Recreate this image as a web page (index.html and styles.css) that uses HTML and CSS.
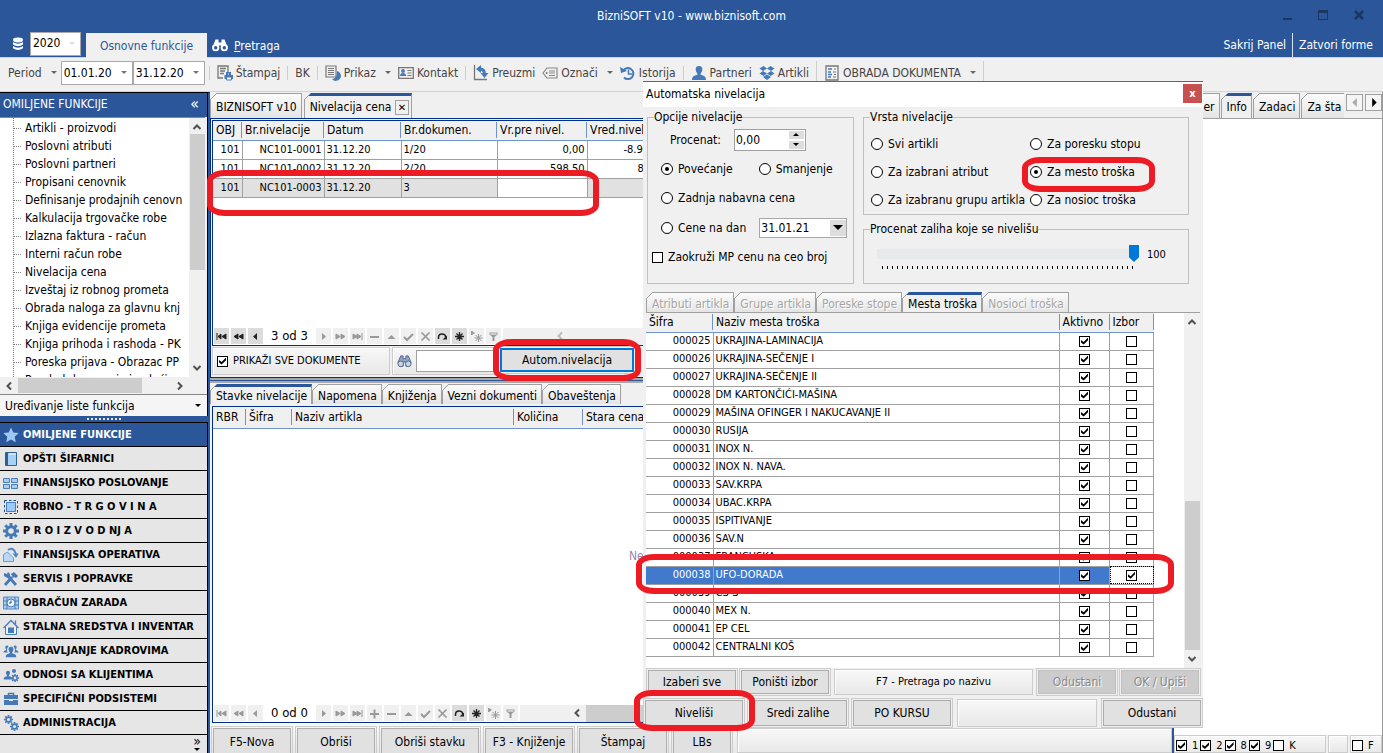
FILE: index.html
```html
<!DOCTYPE html>
<html lang="sr-Latn">
<head>
    <meta charset="UTF-8">
    <meta name="viewport" content="width=device-width, initial-scale=1.0">
    <title>BizniSOFT v10 - www.biznisoft.com</title>
    <link rel="stylesheet" href="styles.css">
</head>
<body>
    <svg class="sprite" aria-hidden="true">
        <symbol id="n-first" viewBox="0 0 15 15"><path d="M3 4v7M7 5v5l-3-2.500zM12 5v5l-4-2.500z" fill="currentColor" stroke="currentColor"/></symbol>
        <symbol id="n-back" viewBox="0 0 15 15"><path d="M7 5v5l-4-2.500zM12 5v5l-4-2.500z" fill="currentColor" stroke="currentColor"/></symbol>
        <symbol id="n-prev" viewBox="0 0 15 15"><path d="M9 4v7l-4-3.500z" fill="currentColor"/></symbol>
        <symbol id="n-next" viewBox="0 0 15 15"><path d="M6 4v7l4-3.500z" fill="currentColor"/></symbol>
        <symbol id="n-fwd" viewBox="0 0 15 15"><path d="M3 5v5l4-2.500zM8 5v5l4-2.500z" fill="currentColor" stroke="currentColor"/></symbol>
        <symbol id="n-last" viewBox="0 0 15 15"><path d="M12 4v7M3 5v5l4-2.500zM7 5v5l4-2.500z" fill="currentColor" stroke="currentColor"/></symbol>
        <symbol id="n-add" viewBox="0 0 15 15"><path d="M3 7h9v2H3zM6.500 3.500h2v9h-2z" fill="currentColor"/></symbol>
        <symbol id="n-del" viewBox="0 0 15 15"><path d="M3 7h9v2H3z" fill="currentColor"/></symbol>
        <symbol id="n-edit" viewBox="0 0 15 15"><path d="M3.500 10h8l-4-4z" fill="currentColor"/></symbol>
        <symbol id="n-post" viewBox="0 0 15 15"><path d="M3 8l3 3 6-6" fill="none" stroke="currentColor" stroke-width="2"/></symbol>
        <symbol id="n-cancel" viewBox="0 0 15 15"><path d="M3.500 3.500l8 8M11.500 3.500l-8 8" stroke="currentColor" stroke-width="1.700"/></symbol>
        <symbol id="n-redo" viewBox="0 0 15 15"><path d="M3.500 10V8.500Q3.500 5 7 5t3.500 3" fill="none" stroke="currentColor" stroke-width="1.500"/><path d="M7.500 10.500H12V6.500z" fill="currentColor"/></symbol>
        <symbol id="n-star" viewBox="0 0 15 15"><path d="M7.500 3v9M3 7.500h9M4.500 4.500l6 6M10.500 4.500l-6 6" stroke="currentColor" stroke-width="1.300"/></symbol>
        <symbol id="n-goto" viewBox="0 0 15 15"><path d="M9.500 5v8M5.500 9h8M6.500 6l6 6M12.500 6l-6 6M2.500 2v4" stroke="currentColor"/><path d="M3 2l3 2-3 2z" fill="currentColor"/></symbol>
        <symbol id="n-filter" viewBox="0 0 15 15"><path d="M3.500 3.500h8v2l-3 2.500v4h-2V8l-3-2.500z" fill="currentColor"/><path d="M4.500 5h6" stroke="#fff"/></symbol>
        <symbol id="gear" viewBox="0 0 16 16"><path d="M8 3V0M8 16v-3M3 8H0M16 8h-3M4.500 4.500L2.300 2.300M11.500 11.500l2.200 2.200M4.500 11.500l-2.200 2.200M11.500 4.500l2.200-2.200" stroke="currentColor" stroke-width="3"/><circle cx="8" cy="8" r="4.300" fill="none" stroke="currentColor" stroke-width="3"/></symbol>
        <symbol id="person" viewBox="0 0 16 16"><path d="M8 1c2.500 0 3.500 1.600 3.300 3.800C11 7 10 8 9.600 8.700v1.100C12 10.500 15 11 15 15H1c0-4 3-4.500 5.400-5.200V8.700C6 8 5 7 4.700 4.800 4.500 2.600 5.500 1 8 1z" fill="currentColor"/></symbol>
        <symbol id="binoc" viewBox="0 0 16 16"><path d="M4 2h2.500v3h3V2H12l3 7-2 4H9.500V8.500h-3V13H3L1 9z" fill="#8fa3c4" stroke="#4f6488"/><circle cx="4" cy="10.500" r="3" fill="#c9d6ea" stroke="#4f6488"/><circle cx="12" cy="10.500" r="3" fill="#c9d6ea" stroke="#4f6488"/></symbol>
    </svg>

    <div class="app">
        <header class="title-bar">
            <span>BizniSOFT v10 - www.biznisoft.com</span>
            <div class="window-buttons">
                <button aria-label="Minimize"><svg viewBox="0 0 12 12"><path d="M2 9h9v2H2z" fill="#1a3661"/></svg></button>
                <button aria-label="Maximize"><svg viewBox="0 0 12 12"><path d="M1 1h10v10H1zM2 4v6h8V4z" fill="#1a3661" fill-rule="evenodd"/></svg></button>
                <button aria-label="Close"><svg viewBox="0 0 12 12"><path d="M2 2l8 8M10 2l-8 8" stroke="#1a3661" stroke-width="2.500"/></svg></button>
            </div>
        </header>

        <nav class="menu-bar">
            <svg class="db-icon" viewBox="0 0 12 14"><ellipse cx="6" cy="3" rx="5" ry="2.400" fill="#fff"/><path d="M1 5q5 3.500 10 0v2.500q-5 3.500-10 0zM1 9q5 3.500 10 0v2.200q-5 3.500-10 0z" fill="#fff"/></svg>
            <span class="combo year"><select aria-label="Godina"><option>2020</option></select></span>
            <button class="ribbon-tab">Osnovne funkcije</button>
            <button class="search-link">
                <svg viewBox="0 0 16 14"><path d="M3.500 1.500h3v3h3v-3h3L15 8v3H9.500V7.500h-3V11H1V8z" fill="#fff"/><circle cx="3.700" cy="9.700" r="3.600" fill="#fff"/><circle cx="12.300" cy="9.700" r="3.600" fill="#fff"/><circle cx="3.700" cy="9.700" r="1.700" fill="#2b579a"/><circle cx="12.300" cy="9.700" r="1.700" fill="#2b579a"/></svg>
                <span><u>P</u>retraga</span>
            </button>
            <div class="menu-right">
                <button>Sakrij Panel</button>
                <button>Zatvori forme</button>
            </div>
        </nav>

        <div class="toolbar">
            <button class="period caret">Period</button>
            <span class="combo date"><input type="text" value="01.01.20" aria-label="Od datuma"></span>
            <span class="combo date"><input type="text" value="31.12.20" aria-label="Do datuma"></span>
            <i class="sep"></i>
            <button><svg viewBox="0 0 16 16"><path d="M6 13H1V1h10v6M3 3.500h6M3 6h5M3 8.500h4" fill="none" stroke="#777" stroke-width="1.300"/><path d="M9 7h5v3h2v4H7.500v-4H9z" fill="#4679b8"/><path d="M10.500 8h2v2h-2zM9.500 12h5v3h-5z" fill="#fff" stroke="#4679b8"/></svg>Štampaj</button>
            <i class="sep"></i>
            <button>BK</button>
            <i class="sep"></i>
            <button class="caret"><svg viewBox="0 0 16 16"><path d="M1 1h10v11H1zM3 3.500h6M3 5.500h6M3 7.500h6M3 9.500h6" fill="none" stroke="#777" stroke-width="1.200"/><path d="M12 6a5 5 0 1 1-5 8q5 0 5-8z" fill="#4679b8"/></svg>Prikaz</button>
            <button><svg viewBox="0 0 16 16"><path d="M.7 2.700h14.600v10.600H.7z" fill="none" stroke="#777" stroke-width="1.300"/><path d="M9.500 5.500h4M9.500 8h4M9.500 10.500h4" stroke="#777"/><circle cx="5" cy="6" r="1.900" fill="#4679b8"/><path d="M2 11q0-3 3-3t3 3z" fill="#4679b8"/></svg>Kontakt</button>
            <i class="sep"></i>
            <button><svg viewBox="0 0 16 16"><path d="M1.500 0v14.500H14" fill="none" stroke="#777" stroke-width="1.300"/><path d="M7 4q4.500 0 4.500 5" fill="none" stroke="#4679b8" stroke-width="3"/><path d="M8 0v8L3 4zM7.500 8h8l-4 5z" fill="#4679b8"/></svg>Preuzmi</button>
            <button class="caret"><svg viewBox="0 0 16 16"><path d="M1 8l4-5h10v10H5zM7 6h6M7 8h6M7 10.500h6" fill="none" stroke="#888" stroke-width="1.200"/><circle cx="4.700" cy="8" r="1" fill="#777"/></svg>Označi</button>
            <button><svg viewBox="0 0 16 16"><path d="M3 6a5.500 5.500 0 1 1 1 6.500" fill="none" stroke="#4679b8" stroke-width="2"/><path d="M0 2l1 6 6-2z" fill="#4679b8"/><path d="M8.500 4.500V9H12" fill="none" stroke="#4679b8" stroke-width="1.500"/></svg>Istorija</button>
            <i class="sep"></i>
            <button><svg class="blue"><use href="#person"/></svg>Partneri</button>
            <button><svg viewBox="0 0 16 16"><path d="M4.500 1L8 3.500 4 6 .5 3.500zM11.500 1l4 2.500L12 6 8 3.500zM4 6l4 2.500L4.500 11 .5 8.500zM12 6l3.500 2.500-4 2.500L8 8.500zM4 12l4-2.500 4 2.500-4 3z" fill="#4679b8"/></svg>Artikli</button>
            <i class="sep tall"></i>
            <button class="caret"><svg viewBox="0 0 16 16"><path d="M2 1h12v14H2z" fill="none" stroke="#777" stroke-width="1.300"/><path d="M4 4h4M4 7h3M4 9.500h4M4 12h3" stroke="#4679b8" stroke-width="1.500"/><path d="M10 4h2M9 7h3M10 9.500h2M9 12h3" stroke="#777"/></svg>OBRADA DOKUMENTA</button>
            <i class="sep tall"></i>
        </div>

        <div class="workspace">
            <aside class="sidebar">
                <h2>OMILJENE FUNKCIJE<span>«</span></h2>
                <div class="tree-box">
                    <ul class="tree">
                        <li>Artikli - proizvodi</li>
                        <li>Poslovni atributi</li>
                        <li>Poslovni partneri</li>
                        <li>Propisani cenovnik</li>
                        <li>Definisanje prodajnih cenovn</li>
                        <li>Kalkulacija trgovačke robe</li>
                        <li>Izlazna faktura - račun</li>
                        <li>Interni račun robe</li>
                        <li>Nivelacija cena</li>
                        <li>Izveštaj iz robnog prometa</li>
                        <li>Obrada naloga za glavnu knj</li>
                        <li>Knjiga evidencije prometa</li>
                        <li>Knjiga prihoda i rashoda - PK</li>
                        <li>Poreska prijava - Obrazac PP</li>
                        <li>Pregled dugovanja i uplaći</li>
                    </ul>
                    <div class="vscroll"><svg viewBox="0 0 10 10"><path d="M1.500 7L5 3.500 8.500 7"/></svg><i class="tree-thumb"></i><svg viewBox="0 0 10 10"><path d="M1.500 3L5 6.500 8.500 3"/></svg></div>
                </div>
                <div class="hscroll"><svg viewBox="0 0 10 10"><path d="M7 1.500L3.500 5 7 8.500"/></svg><i></i><svg viewBox="0 0 10 10"><path d="M3 1.500L6.500 5 3 8.500"/></svg></div>
                <button class="edit-list">Uređivanje liste funkcija</button>
                <div class="grip"><i></i></div>
                <nav class="modules">
                    <a href="#" class="active"><svg viewBox="0 0 16 16"><path d="M8 .5l2.300 5 5.400.6-4 3.700 1.100 5.400L8 12.500l-4.800 2.700 1.100-5.400-4-3.700 5.400-.6z" fill="#9cc8f2"/></svg>OMILJENE FUNKCIJE</a>
                    <a href="#"><svg viewBox="0 0 16 16"><path d="M2.500 1.500h11v13h-11z" fill="#a9d0f5" stroke="#2f5f94"/><path d="M3 2h2v12H3z" fill="#2f5f94"/><path d="M6 3h7" stroke="#fff"/></svg>OPŠTI ŠIFARNICI</a>
                    <a href="#"><svg viewBox="0 0 16 16"><path d="M.5 3.500h6v4h-6zM8.500 3.500h6v4h-6zM.5 9.500h6v4h-6zM8.500 9.500h6v4h-6z" fill="#a9cdf0" stroke="#4a7db8"/></svg>FINANSIJSKO POSLOVANJE</a>
                    <a href="#"><svg viewBox="0 0 16 16"><path d="M1.500 1.500h13v13h-13z" fill="none" stroke="#234a7a" stroke-dasharray="2.500 2"/><path d="M3.500 3.500h9v9h-9z" fill="#9dcbf7" stroke="#3f7fc8"/></svg>ROBNO - T R G O V I N A</a>
                    <a href="#"><svg class="blue"><use href="#gear"/></svg>P R O I Z V O D NJ A</a>
                    <a href="#"><svg viewBox="0 0 16 16"><path d="M.5 14.500v-7l4-2.500 6 6v3.500z" fill="#b8d8f5" stroke="#6a9cd0"/><path d="M5 3q5-4 8 4" fill="none" stroke="#4d86c4" stroke-width="2"/><path d="M9.500 6.500h6L13 11z" fill="#4d86c4"/></svg>FINANSIJSKA OPERATIVA</a>
                    <a href="#"><svg viewBox="0 0 16 16"><path d="M2 14l7-8M4 4l9 10" stroke="#4679b8" stroke-width="2.800"/><path d="M1 2l3 1 1-2 2 2v3L4.500 7 1 5zM8 3l3-2 4 4-2 2-2-1-1 1z" fill="#4679b8"/></svg>SERVIS I POPRAVKE</a>
                    <a href="#"><svg viewBox="0 0 16 16"><path d="M.5 2h15v12H.5z" fill="#a9cdf0" stroke="#5a8dc4"/><path d="M0 6h16M0 10h16M4 2v12M12 2v12" stroke="#4a7db8"/><circle cx="8" cy="8" r="4" fill="#e8f3fd" stroke="#4a7db8"/><path d="M8 5.500V8H6" fill="none" stroke="#24507f"/></svg>OBRAČUN ZARADA</a>
                    <a href="#"><svg viewBox="0 0 16 16"><path d="M2.500 8v7.500h11V8" fill="#eaf3fc" stroke="#4a7db8"/><path d="M.5 9L8 1.500 15.500 9M12.500 6V1.500" fill="none" stroke="#4a7db8" stroke-width="1.300"/><path d="M5 8.500h6V14H5z" fill="#4679b8"/></svg>STALNA SREDSTVA I INVENTAR</a>
                    <a href="#"><svg viewBox="0 0 16 16" class="blue"><use href="#person" x="0" y="1" width="8" height="10"/><use href="#person" x="8" y="1" width="8" height="10"/><circle cx="8" cy="7" r="4" fill="#e6e6e6"/><use href="#person" x="2" y="3" width="12" height="12"/></svg>UPRAVLJANJE KADROVIMA</a>
                    <a href="#"><svg viewBox="0 0 16 16" class="blue"><use href="#person" x="0" y="2" width="10" height="12"/><use href="#gear" x="8" y="7" width="8" height="8"/><circle cx="11" cy="4" r="2" fill="#4679b8"/></svg>ODNOSI SA KLIJENTIMA</a>
                    <a href="#"><svg viewBox="0 0 16 16"><path d="M5.500 4V2.500h5V4" fill="none" stroke="#4679b8" stroke-width="1.500"/><path d="M1 4h14v4H1zM1 9h5v1h4V9h5v5H1z" fill="#4679b8"/></svg>SPECIFIČNI PODSISTEMI</a>
                    <a href="#"><svg viewBox="0 0 16 16" class="blue"><use href="#gear" x="1" y="0" width="9" height="9"/><use href="#gear" x="7" y="7" width="9" height="9"/></svg>ADMINISTRACIJA</a>
                </nav>
                <div class="more"><span>»</span><i></i></div>
            </aside>

            <main class="main">
                <div class="tabs">
                    <button class="tab">BIZNISOFT v10</button>
                    <button class="tab active">Nivelacija cena <span class="tab-close">✕</span></button>
                </div>
                <section class="pane upper">
                    <div class="grid-box">
                        <table class="grid documents">
                            <colgroup><col class="c-obj"><col class="c-no"><col class="c-date"><col class="c-doc"><col class="c-val"><col></colgroup>
                            <thead><tr><th>OBJ</th><th>Br.nivelacije</th><th>Datum</th><th>Br.dokumen.</th><th>Vr.pre nivel.</th><th>Vred.nivel.</th></tr></thead>
                            <tbody>
                                <tr><td class="num">101</td><td class="num">NC101-0001</td><td>31.12.20</td><td>1/20</td><td class="num">0,00</td><td class="cut">-8.900,00</td></tr>
                                <tr><td class="num">101</td><td class="num">NC101-0002</td><td>31.12.20</td><td>2/20</td><td class="num">598,50</td><td class="cut far">89,78</td></tr>
                                <tr class="current"><td class="num">101</td><td class="num">NC101-0003</td><td>31.12.20</td><td>3</td><td class="focused"></td><td></td></tr>
                            </tbody>
                        </table>
                        <div class="navigator" id="navTop"></div>
                    </div>
                    <div class="strip">
                        <label class="panel show-all"><input type="checkbox" checked> PRIKAŽI SVE DOKUMENTE</label>
                        <div class="panel find"><svg><use href="#binoc"/></svg><input type="text" aria-label="Pronađi"></div>
                        <button class="btn focus auto">Autom.nivelacija</button>
                    </div>
                </section>
                <div class="splitter"></div>
                <div class="tabs small">
                    <button class="tab active">Stavke nivelacije</button>
                    <button class="tab">Napomena</button>
                    <button class="tab">Knjiženja</button>
                    <button class="tab">Vezni dokumenti</button>
                    <button class="tab">Obaveštenja</button>
                </div>
                <section class="pane lower">
                    <table class="grid items">
                        <colgroup><col class="c-rbr"><col class="c-code"><col class="c-name"><col class="c-qty"><col></colgroup>
                        <thead><tr><th>RBR</th><th>Šifra</th><th>Naziv artikla</th><th>Količina</th><th>Stara cena</th></tr></thead>
                    </table>
                    <div class="empty">Ne</div>
                    <div class="navigator" id="navBottom"></div>
                </section>
                <div class="actions">
                    <button class="btn w80">F5-Nova</button>
                    <button class="btn w80">Obriši</button>
                    <button class="btn w100">Obriši stavku</button>
                    <button class="btn w90">F3 - Knjiženje</button>
                    <button class="btn w90">Štampaj</button>
                    <button class="btn w60">LBs</button>
                    <div class="panel"></div>
                </div>
            </main>

            <aside class="info">
                <div class="tabs">
                    <button class="tab first">er</button>
                    <button class="tab active">Info</button>
                    <button class="tab">Zadaci</button>
                    <button class="tab last">Za šta</button>
                    <button class="arrow off" aria-label="Levo"><svg viewBox="0 0 10 10"><path d="M7 0v10L2 5z"/></svg></button>
                    <button class="arrow" aria-label="Desno"><svg viewBox="0 0 10 10"><path d="M3 0v10l5-5z"/></svg></button>
                </div>
                <div class="info-body"></div>
                <div class="flags">
                    <div class="panel">
                        <label><input type="checkbox" checked> 1</label>
                        <label><input type="checkbox" checked> 2</label>
                        <label><input type="checkbox" checked> 8</label>
                        <label><input type="checkbox" checked> 9</label>
                        <label><input type="checkbox"> K</label>
                    </div>
                    <div class="panel blank"></div>
                    <div class="panel"><label><input type="checkbox"> F</label></div>
                </div>
            </aside>
        </div>

        <div class="dialog" role="dialog" aria-label="Automatska nivelacija">
            <div class="dialog-title"><span>Automatska nivelacija</span><button aria-label="Zatvori">x</button></div>
            <div class="dialog-options">
                <fieldset class="opts">
                    <legend>Opcije nivelacije</legend>
                    <div class="row percent"><label for="procenat">Procenat:</label><span class="spin"><input id="procenat" type="text" value="0,00"><span class="spin-btns"><button aria-label="Više"><i class="up"></i></button><button aria-label="Manje"><i class="down"></i></button></span></span></div>
                    <div class="row two"><label><input type="radio" name="opt" checked> Povećanje</label><label><input type="radio" name="opt"> Smanjenje</label></div>
                    <div class="row"><label><input type="radio" name="opt"> Zadnja nabavna cena</label></div>
                    <div class="row day"><label><input type="radio" name="opt"> Cene na dan</label><span class="combo boxed"><input type="text" value="31.01.21" aria-label="Datum cena"></span></div>
                    <div class="row round"><label><input type="checkbox"> Zaokruži MP cenu na ceo broj</label></div>
                </fieldset>
                <div class="right-opts">
                    <fieldset class="kinds">
                        <legend>Vrsta nivelacije</legend>
                        <label><input type="radio" name="kind"> Svi artikli</label>
                        <label><input type="radio" name="kind"> Za poresku stopu</label>
                        <label><input type="radio" name="kind"> Za izabrani atribut</label>
                        <label><input type="radio" name="kind" checked> Za mesto troška</label>
                        <label><input type="radio" name="kind"> Za izabranu grupu artikla</label>
                        <label><input type="radio" name="kind"> Za nosioc troška</label>
                    </fieldset>
                    <fieldset class="stock">
                        <legend>Procenat zaliha koje se nivelišu</legend>
                        <div class="slider"><input type="range" value="100" aria-label="Procenat zaliha"><i class="ticks"></i></div>
                        <output>100</output>
                    </fieldset>
                </div>
            </div>
            <div class="tabs small">
                <button class="tab" disabled>Atributi artikla</button>
                <button class="tab" disabled>Grupe artikla</button>
                <button class="tab" disabled>Poreske stope</button>
                <button class="tab active">Mesta troška</button>
                <button class="tab" disabled>Nosioci troška</button>
            </div>
            <div class="places-box">
                <table class="grid places">
                    <colgroup><col class="c-sifra"><col><col class="c-act"><col class="c-sel"></colgroup>
                    <thead><tr><th>Šifra</th><th>Naziv mesta troška</th><th>Aktivno</th><th>Izbor</th></tr></thead>
                    <tbody id="places"></tbody>
                </table>
                <div class="vscroll"><svg viewBox="0 0 10 10"><path d="M1.500 7L5 3.500 8.500 7"/></svg><i class="places-thumb"></i><svg viewBox="0 0 10 10"><path d="M1.500 3L5 6.500 8.500 3"/></svg></div>
            </div>
            <div class="dialog-row">
                <button class="btn w90">Izaberi sve</button>
                <button class="btn w90">Poništi izbor</button>
                <div class="panel hint">F7 - Pretraga po nazivu</div>
                <button class="btn w80" disabled>Odustani</button>
                <button class="btn w80" disabled>OK / Upiši</button>
            </div>
            <div class="dialog-row bottom">
                <button class="btn w100">Niveliši</button>
                <button class="btn w100">Sredi zalihe</button>
                <button class="btn w100">PO KURSU</button>
                <div class="panel hint"></div>
                <button class="btn w100">Odustani</button>
            </div>
        </div>

        <div class="mark mark-row"></div>
        <div class="mark mark-auto"></div>
        <div class="mark mark-kind"></div>
        <div class="mark mark-place"></div>
        <div class="mark mark-run"></div>
    </div>

    <script>
        const places = [
            ["000025", "UKRAJINA-LAMINACIJA"], ["000026", "UKRAJINA-SEČENJE I"], ["000027", "UKRAJINA-SEČENJE II"],
            ["000028", "DM KARTONČIĆI-MAŠINA"], ["000029", "MAŠINA OFINGER I NAKUCAVANJE II"], ["000030", "RUSIJA"],
            ["000031", "INOX N."], ["000032", "INOX N. NAVA."], ["000033", "SAV.KRPA"], ["000034", "UBAC.KRPA"],
            ["000035", "ISPITIVANJE"], ["000036", "SAV.N"], ["000037", "FRANCUSKA"], ["000038", "UFO-DORADA"],
            ["000039", "CS-S"], ["000040", "MEX N."], ["000041", "EP CEL"], ["000042", "CENTRALNI KOŠ"]
        ];

        function showPlaces() {
            let body = document.getElementById("places");
            places.forEach(([code, name]) => {
                let selected = code === "000038";
                let row = document.createElement("tr");
                if (selected) row.className = "selected";
                row.innerHTML = `<td class="num">${code}</td><td>${name}</td>
                                 <td class="tick"><input type="checkbox" checked aria-label="Aktivno ${code}"></td>
                                 <td class="tick"><input type="checkbox" ${selected ? "checked" : ""} aria-label="Izbor ${code}"></td>`;
                body.appendChild(row);
            });
        }

        function showNavigator(id, text, before, after, enabled) {
            let button = name => `<button aria-label="${name}" ${enabled.includes(name) ? "" : "disabled"}><svg><use href="#n-${name}"/></svg></button>`;
            document.getElementById(id).innerHTML = before.map(button).join("") + `<span>${text}</span>` + after.map(button).join("")
                + `<div class="nav-scroll"><svg viewBox="0 0 10 10"><path d="M7 1.500L3.500 5 7 8.500"/></svg><i></i></div>`;
        }

        showPlaces();
        showNavigator("navTop", "3 od 3", ["first", "back", "prev"],
            ["next", "fwd", "last", "del", "edit", "post", "cancel", "redo", "star", "goto", "filter"],
            ["first", "back", "prev", "redo", "star"]);
        showNavigator("navBottom", "0 od 0", ["first", "back", "prev"],
            ["next", "fwd", "last", "add", "del", "edit", "post", "cancel", "redo", "star", "goto", "filter"],
            ["redo", "star"]);
    </script>
</body>
</html>
```
FILE: styles.css
```css
* {
    box-sizing: border-box;
}
body {
    margin: 0;
    font-family: Tahoma, "DejaVu Sans Condensed", "Noto Sans", sans-serif;
    font-size: 12px;
    line-height: 16px;
    color: #000;
    background: #f0f0f0;
}
button, input, select {
    font: inherit;
    color: inherit;
    margin: 0;
    padding: 0;
    border: none;
    background: none;
    border-radius: 0;
}
input:focus, select:focus {
    outline: none;
}
button {
    white-space: nowrap;
}
.sprite {
    display: none;
}
.blue {
    color: #4679b8;
}
.app {
    position: relative;
    display: flex;
    flex-direction: column;
    height: 100vh;
    overflow: hidden;
}

/* title and menu */
.title-bar {
    display: flex;
    align-items: center;
    justify-content: center;
    height: 32px;
    background: #2b579a;
    color: #fff;
    position: relative;
}
.window-buttons {
    position: absolute;
    right: 18px;
    top: 9px;
    display: flex;
    gap: 24px;
}
.window-buttons svg {
    display: block;
    width: 12px;
    height: 12px;
}
.menu-bar {
    display: flex;
    align-items: flex-end;
    height: 26px;
    background: #2b579a;
    color: #fff;
    border-bottom: 1px solid #d0d4da;
}
.db-icon {
    width: 12px;
    height: 14px;
    margin: 0 6px 6px 12px;
}
.combo {
    position: relative;
    display: inline-flex;
    background: #fff;
    color: #000;
    border: 1px solid #a8a8a8;
}
.combo::after {
    content: "";
    position: absolute;
    right: 5px;
    top: 9px;
    border: 3px solid transparent;
    border-top-color: #777;
    border-bottom: none;
}
.combo input, .combo select {
    width: 100%;
    padding-left: 2px;
    appearance: none;
}
.year {
    width: 51px;
    height: 24px;
    margin-bottom: 1px;
    padding-bottom: 3px;
}
.year::after {
    border-top-color: #ddd;
}
.ribbon-tab {
    width: 121px;
    height: 25px;
    margin: 0 0 -1px 5px;
    background: #f0f0f0;
    color: #2b579a;
}
.search-link {
    display: flex;
    gap: 6px;
    padding: 0 0 3px 5px;
}
.search-link svg {
    width: 16px;
    height: 14px;
}
.menu-right {
    margin-left: auto;
    display: flex;
    padding-right: 4px;
}
.menu-right button {
    height: 24px;
    padding: 0 6px;
}
.menu-right button + button {
    border-left: 1px solid #dfe5ee;
}

/* toolbar */
.toolbar {
    display: flex;
    align-items: center;
    height: 34px;
    padding-bottom: 4px;
    border-bottom: 1px solid #d2d2d2;
    color: #444;
}
.toolbar button {
    display: flex;
    align-items: center;
    gap: 3px;
    margin-right: 7px;
}
.toolbar svg {
    width: 16px;
    height: 16px;
}
.toolbar .period {
    margin: 0 4px 0 8px;
}
.caret::after {
    content: "";
    margin-left: 6px;
    border: 3px solid transparent;
    border-top-color: #666;
    border-bottom: none;
}
.date {
    width: 72px;
    height: 24px;
}
.sep {
    width: 1px;
    height: 14px;
    background: #ccc;
    margin: 0 7px 0 0;
}
.date + .sep {
    margin-left: 4px;
}
.sep.tall {
    height: 24px;
}

.workspace {
    flex: 1;
    display: flex;
    min-height: 0;
}

/* left column */
.sidebar {
    width: 210px;
    flex: none;
    display: flex;
    flex-direction: column;
    border-top: 1px solid #000;
    border-right: 2px solid #2b579a;
    box-shadow: inset -1px 0 #000;
}
.sidebar h2 {
    display: flex;
    justify-content: space-between;
    margin: 0 1px 0 0;
    padding: 0 8px 0 3px;
    height: 24px;
    line-height: 23px;
    font-size: 12px;
    font-weight: normal;
    color: #fff;
    background: #2b579a;
}
.sidebar h2 span {
    font-size: 16px;
    line-height: 21px;
}
.tree-box {
    display: flex;
    height: 260px;
    margin-right: 3px;
    border-top: 1px solid #888;
    background: #fff;
}
.tree {
    flex: 1;
    list-style: none;
    margin: 0 0 0 13px;
    padding: 1px 0 0;
    overflow: hidden;
    white-space: nowrap;
    border-left: 1px dotted #808080;
}
.tree li {
    display: flex;
    align-items: center;
    height: 18px;
}
.tree li::before {
    content: "";
    flex: none;
    width: 7px;
    margin-right: 4px;
    border-top: 1px dotted #808080;
}
.vscroll {
    display: flex;
    flex-direction: column;
    justify-content: space-between;
    align-items: center;
    width: 16px;
    background: #f0f0f0;
    padding: 4px 0;
}
.vscroll svg, .hscroll svg, .nav-scroll svg {
    flex: none;
    width: 10px;
    height: 10px;
    fill: none;
    stroke: #505050;
    stroke-width: 2;
}
.vscroll i {
    width: 15px;
    background: #cdcdcd;
}
.tree-thumb {
    height: 136px;
    margin: 2px 0 auto;
}
.hscroll {
    display: flex;
    align-items: center;
    height: 17px;
    padding: 0 22px 0 4px;
    margin-right: 1px;
    background: #f0f0f0;
}
.hscroll i {
    width: 124px;
    height: 15px;
    margin: 0 auto 0 4px;
    background: #cdcdcd;
}
.edit-list {
    height: 22px;
    margin-right: 1px;
    padding: 0 6px 0 5px;
    display: flex;
    justify-content: space-between;
    align-items: center;
    border-top: 1px solid #888;
    background: #f5f5f5;
}
.edit-list::after {
    content: "";
    border: 3px solid transparent;
    border-top-color: #000;
    border-bottom: none;
}
.grip {
    height: 6px;
    background: #2b579a;
    display: flex;
    align-items: center;
    justify-content: center;
}
.grip i {
    width: 35px;
    height: 2px;
    background: repeating-linear-gradient(90deg, #e8e8e8 0 2px, #2b579a 2px 4px);
}
.modules {
    margin-right: 1px;
    border-bottom: 1px solid #000;
}
.modules a {
    display: flex;
    align-items: center;
    gap: 4px;
    height: 24px;
    padding-left: 3px;
    border-top: 1px solid #000;
    background: #e6e6e6;
    color: #000;
    font-size: 11px;
    font-weight: bold;
    text-decoration: none;
    white-space: nowrap;
}
.modules a.active {
    background: #2b579a;
    color: #fff;
}
.modules svg {
    width: 16px;
    height: 16px;
    flex: none;
}
.more {
    flex: 1;
    margin-right: 1px;
    padding-right: 6px;
    background: #e6e6e6;
    display: flex;
    flex-direction: column;
    align-items: flex-end;
    font-size: 14px;
    line-height: 13px;
}
.more i {
    border: 3px solid transparent;
    border-top-color: #000;
    border-bottom: none;
    margin-right: 1px;
}

/* tabs */
.tabs {
    display: flex;
    align-items: flex-end;
    height: 26px;
    gap: 2px;
    flex: none;
}
.tab {
    position: relative;
    height: 25px;
    padding: 2px 4px 0 5px;
    border: 1px solid #a0a0a0;
    border-bottom: none;
    background: linear-gradient(#fbfbfb, #e4e4e4);
}
.tab::before {
    content: "";
    position: absolute;
    left: -1px;
    top: -1px;
    width: 7px;
    height: 7px;
    background: linear-gradient(135deg, #f0f0f0 45%, #a0a0a0 45% 55%, transparent 55%);
}
.tab.active {
    background: #f0f0f0;
    border-top: 3px solid #2b579a;
    padding-top: 0;
}
.tab.active::before {
    top: -3px;
}
.tab:disabled {
    color: #a5a5a5;
    text-shadow: 1px 1px #fff;
}
.tab-close {
    display: inline-block;
    width: 14px;
    height: 15px;
    margin-right: -2px;
    border: 1px solid #a0a0a0;
    font: bold 10px/13px "DejaVu Sans", sans-serif;
}
.small {
    height: 21px;
    gap: 0;
}
.small .tab {
    height: 20px;
}

/* grids */
.grid {
    border-collapse: collapse;
    table-layout: fixed;
    width: 100%;
}
.grid th {
    font-weight: normal;
    text-align: left;
    padding: 0 3px;
    background: linear-gradient(#6f93cc, #6f93cc) 100% 50% / 1px 16px no-repeat #f0f0f0;
    border-bottom: 1px solid #6f93cc;
    white-space: nowrap;
    overflow: hidden;
}
.grid td {
    padding: 0 2px;
    border: 1px solid #a0a0a0;
    border-top: none;
    font-size: 11px;
    line-height: 14px;
    white-space: nowrap;
    overflow: hidden;
}
.grid td:first-child {
    border-left: none;
}
.num {
    text-align: right;
}
.main {
    flex: 1;
    min-width: 0;
    display: flex;
    flex-direction: column;
}
.pane {
    border: 1px solid #002f87;
    background: #fff;
    display: flex;
    flex-direction: column;
}
.upper {
    height: 260px;
    flex: none;
    padding: 1px;
    background: #f0f0f0;
}
.grid-box {
    height: 226px;
    border: 1px solid #002f87;
    background: #fff;
    display: flex;
    flex-direction: column;
    justify-content: space-between;
}
.documents th {
    height: 19px;
}
.documents td {
    height: 19px;
}
.documents .cut {
    padding-left: 36px;
}
.documents .far {
    padding-left: 50px;
}
.documents .current td {
    background: #e1e1e1;
}
.documents .current .focused {
    background: #fff;
}
.c-obj { width: 29px; }
.c-no { width: 82px; }
.c-date { width: 77px; }
.c-doc { width: 96px; }
.c-val { width: 90px; }
.c-rbr { width: 33px; }
.c-code { width: 46px; }
.c-name { width: 222px; }
.c-qty { width: 69px; }
.c-sifra { width: 67px; }
.c-act { width: 50px; }
.c-sel { width: 44px; }

.navigator {
    display: flex;
    align-items: center;
    gap: 2px;
    height: 18px;
    padding-left: 1px;
}
.navigator button {
    width: 15px;
    height: 16px;
    background: #dcdcdc;
    color: #222;
}
.navigator button:disabled {
    background: #f0f0f0;
    color: #999;
}
.navigator button svg {
    display: block;
    width: 15px;
    height: 15px;
}
.navigator span {
    width: 49px;
    text-align: center;
    font-size: 13px;
    white-space: nowrap;
}
.nav-scroll {
    flex: 1;
    display: flex;
    align-items: center;
    height: 17px;
    padding-left: 52px;
    background: #f0f0f0;
}
#navTop .nav-scroll svg {
    stroke: #bbb;
}
#navBottom .nav-scroll i {
    flex: 1;
    height: 17px;
    margin-left: 4px;
    background: #cdcdcd;
}
.panel {
    border: 1px solid #ccc;
    background: linear-gradient(#f8f8f8, #e8e8e8);
    box-shadow: inset 1px 1px #fff;
}
.strip {
    display: flex;
    gap: 2px;
    padding-top: 1px;
    height: 29px;
}
.show-all {
    width: 178px;
    display: flex;
    align-items: center;
    gap: 5px;
    padding-left: 4px;
    font-size: 11px;
}
.find {
    width: 106px;
    display: flex;
    align-items: center;
    gap: 4px;
    padding-left: 4px;
}
.find svg {
    width: 15px;
    height: 15px;
    flex: none;
}
.find input {
    flex: 1;
    min-width: 0;
    height: 22px;
    background: #fff;
    border: 1px solid #a0a0a0;
}
.btn {
    height: 27px;
    background: #e1e1e1;
    border: 1px solid #adadad;
    outline: 1px solid #ccc;
    outline-offset: 1px;
}
.btn:disabled {
    background: #ccc;
    border-color: #bfbfbf;
    color: #888;
    text-shadow: 1px 1px #fff;
}
.btn.focus {
    height: 24px;
    border: 2px solid #0078d7;
    margin-top: 1px;
}
.auto { width: 134px; }
.w60 { width: 58px; }
.w80 { width: 78px; }
.w90 { width: 88px; }
.w100 { width: 98px; }
.splitter {
    height: 5px;
    flex: none;
    background: linear-gradient(#a8a8a8 0 2px, #2b579a 2px 3px, #a8a8a8 3px);
}
.lower {
    flex: 1;
    justify-content: space-between;
    margin: 2px 0 0 2px;
}
.items th {
    height: 21px;
}
.empty {
    margin: 0 auto 20px 0;
    padding-left: 416px;
    color: #9a86b0;
}
.actions {
    display: flex;
    gap: 6px;
    height: 30px;
    padding: 5px 0 0 3px;
    overflow: hidden;
    flex: none;
    background: linear-gradient(#f8f8f8, #e8e8e8);
}
.actions .panel {
    flex: 1;
}

/* right column */
.info {
    width: 211px;
    flex: none;
    display: flex;
    flex-direction: column;
    border-left: 2px solid #2b579a;
    border-right: 1px solid #999;
}
.info .tabs {
    gap: 1px;
}
.info .first {
    width: 46px;
    text-align: right;
}
.info .last {
    width: 43px;
    border-right: none;
}
.arrow {
    width: 17px;
    height: 17px;
    margin: 2px 0 0 1px;
    align-self: flex-start;
    border: 1px solid #a0a0a0;
    background: #f5f5f5;
}
.arrow svg {
    display: block;
    width: 10px;
    height: 9px;
    margin: auto;
}
.arrow.off {
    fill: #aaa;
}
.info-body {
    flex: 1;
    background: #fff;
    border-top: 1px solid #a0a0a0;
}
.flags {
    display: flex;
    gap: 2px;
    height: 18px;
    background: #f0f0f0;
}
.flags .panel {
    display: flex;
    align-items: center;
    gap: 2px;
    padding: 3px 1px 0;
    font-size: 11px;
}
.flags .panel:first-child {
    width: 152px;
}
.flags .blank {
    width: 20px;
}
.flags .panel:last-child {
    flex: 1;
}
.flags label {
    display: flex;
    align-items: center;
    gap: 5px;
}

/* form controls */
input[type="checkbox"], input[type="radio"] {
    appearance: none;
    position: relative;
    flex: none;
    width: 11px;
    height: 11px;
    background: #fff;
    border: 1px solid #000;
}
input[type="checkbox"]:checked::after {
    content: "";
    position: absolute;
    inset: 1px;
    background: #000;
    clip-path: polygon(0 35%, 38% 65%, 100% 0, 100% 38%, 38% 100%, 0 72%);
}
input[type="radio"] {
    width: 12px;
    height: 12px;
    border-radius: 50%;
}
input[type="radio"]:checked::after {
    content: "";
    position: absolute;
    inset: 3px;
    border-radius: 50%;
    background: #000;
}

/* dialog */
.dialog {
    position: absolute;
    left: 643px;
    top: 81px;
    width: 560px;
    background: #f0f0f0;
    border-top: 1px solid #666;
}
.dialog-title {
    display: flex;
    justify-content: space-between;
    height: 25px;
    padding: 2px 1px 0 3px;
    line-height: 21px;
    background: #fff;
}
.dialog-title button {
    width: 19px;
    height: 19px;
    background: #c75050;
    color: #fff;
    font-size: 11px;
    font-weight: bold;
    line-height: 16px;
}
.dialog-options {
    display: flex;
    gap: 9px;
    padding: 2px 14px 7px 4px;
}
.dialog fieldset {
    margin: 0;
    border: 1px solid #c0c0c0;
    min-width: 0;
}
.dialog legend {
    padding: 0;
    margin-left: -4px;
}
.opts {
    width: 207px;
    height: 175px;
    padding: 0 6px 0 10px;
}
.opts label, .kinds label {
    display: flex;
    align-items: center;
    gap: 5px;
    white-space: nowrap;
}
.row {
    display: flex;
    align-items: center;
    height: 28px;
    padding-left: 3px;
}
.percent {
    padding: 0 0 0 12px;
    gap: 13px;
    height: 29px;
}
.two {
    gap: 26px;
    height: 30px;
}
.round {
    height: 26px;
    padding: 0;
    margin-left: -6px;
}
.day {
    gap: 13px;
    height: 32px;
}
.spin {
    display: flex;
    width: 72px;
    height: 22px;
    border: 1px solid #a0a0a0;
    background: #fff;
}
.spin input {
    flex: 1;
    min-width: 0;
    padding-left: 1px;
}
.spin-btns {
    display: flex;
    flex-direction: column;
    gap: 2px;
    padding: 1px;
}
.spin button {
    display: flex;
    align-items: center;
    justify-content: center;
    width: 15px;
    flex: 1;
    background: #ddd;
}
.spin i {
    border: 3px solid transparent;
}
.spin .up {
    border-bottom-color: #000;
    border-top: none;
}
.spin .down {
    border-top-color: #000;
    border-bottom: none;
}
.boxed {
    width: 88px;
    height: 20px;
}
.boxed input {
    padding-left: 1px;
    background: linear-gradient(#ddd, #ddd) 100% 50% / 16px 16px no-repeat;
}
.boxed::after {
    right: 3px;
    top: 6px;
    border-width: 5px;
    border-top-color: #000;
}
.right-opts {
    flex: 1;
    display: flex;
    flex-direction: column;
    gap: 6px;
}
.kinds {
    display: grid;
    grid-template-columns: 159px 1fr;
    grid-auto-rows: 28px;
    height: 106px;
    padding: 5px 6px 0 7px;
}
.dialog .kinds legend {
    margin-left: -1px;
}
.stock {
    display: flex;
    gap: 8px;
    height: 63px;
    padding: 8px 6px 0 13px;
}
.dialog .stock legend {
    margin-left: -7px;
}
.slider {
    width: 262px;
}
.slider input {
    display: block;
    appearance: none;
    width: 100%;
    height: 17px;
    background: linear-gradient(#e7eaea, #e7eaea) 0 4px / 100% 10px no-repeat;
}
.slider input::-webkit-slider-thumb {
    appearance: none;
    width: 10px;
    height: 17px;
    background: #0078d7;
    clip-path: polygon(0 0, 100% 0, 100% 72%, 50% 100%, 0 72%);
}
.ticks {
    display: block;
    height: 3px;
    margin: 4px 4px 0 5px;
    background: repeating-linear-gradient(90deg, #000 0 1px, transparent 1px 5px);
}
.stock output {
    font-size: 11px;
    line-height: 20px;
}
.dialog .tabs {
    padding-left: 3px;
}
.places-box {
    display: flex;
    justify-content: space-between;
    height: 356px;
    margin: 0 3px;
    background: #fff;
    border-top: 1px solid #a0a0a0;
}
.places {
    width: 508px;
    height: 344px;
}
.places th {
    height: 19px;
}
.places td {
    height: 18px;
}
.places .tick {
    text-align: center;
}
.places td input {
    display: block;
    margin: auto;
}
.places .selected td {
    background: #4179cd;
    color: #fff;
}
.places .selected td:last-child {
    background: #fff;
    outline: 1px dotted #000;
    outline-offset: -1px;
}
.places-thumb {
    height: 149px;
    margin: auto 0 4px;
}
.dialog-row {
    display: flex;
    gap: 5px;
    padding: 2px 4px 0 5px;
    height: 30px;
}
.dialog-row .btn {
    height: 24px;
}
.dialog-row .hint {
    flex: 1;
    height: 26px;
    margin-top: -1px;
    text-align: center;
    line-height: 24px;
    font-size: 11px;
}
.dialog-row.bottom {
    gap: 6px;
    padding: 2px 2px 0;
}
.bottom .btn {
    height: 26px;
}
.bottom .hint {
    height: 28px;
}

/* red marker outlines */
.mark {
    position: absolute;
    border: 6px solid #ed1c24;
    border-radius: 18px / 11px;
    pointer-events: none;
}
.mark-row { left: 207px; top: 170px; width: 392px; height: 46px; }
.mark-auto { left: 493px; top: 339px; width: 148px; height: 42px; }
.mark-kind { left: 1022px; top: 157px; width: 133px; height: 35px; }
.mark-place { left: 636px; top: 554px; width: 538px; height: 40px; }
.mark-run { left: 634px; top: 690px; width: 121px; height: 41px; }
```
